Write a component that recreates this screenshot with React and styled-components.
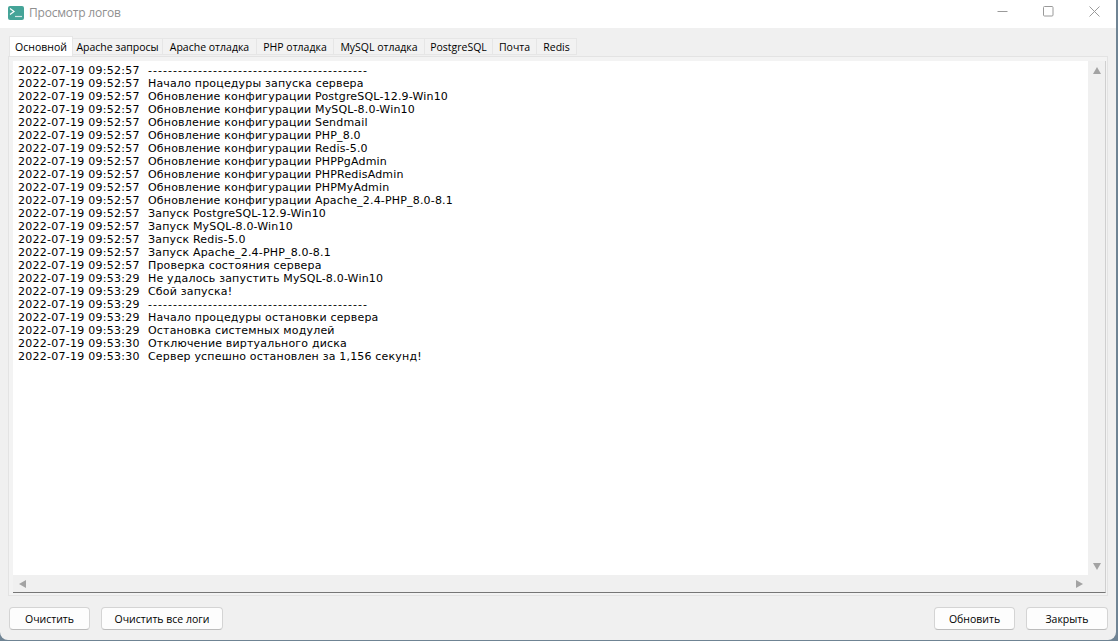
import React from "react";
import styled, { createGlobalStyle } from "styled-components";

const GlobalStyle = createGlobalStyle`
    html, body {
        margin: 0;
        padding: 0;
        height: 100%;
        background: #6f8494;
        overflow: hidden;
    }
    #root {
        height: 100%;
    }
`;

const Frame = styled.div`
    width: 1116px;
    height: 640px;
    display: flex;
    flex-flow: column;
    background: #f0f0f0;
    border-radius: 0 0 8px 8px;
    overflow: hidden;
    font-family: "Open Sans", sans-serif;
    font-size: 10.5px;
    color: #000;
`;

const TitleBar = styled.div`
    height: 28px;
    flex: none;
    display: flex;
    align-items: center;
    background: #fff;
    padding-left: 8px;
`;

const Title = styled.div`
    margin: -3px 0 0 5px;
    font-size: 12px;
    letter-spacing: -0.2px;
    color: #8f8f8f;
`;

const WinButtons = styled.div`
    margin-left: auto;
    display: flex;
    height: 100%;
`;

const WinButton = styled.div`
    width: 46px;
    height: 100%;
    display: flex;
    align-items: center;
    justify-content: center;
    margin-top: -3px;
    transform: translateX(1px);
`;

const Body = styled.div`
    flex: 1;
    display: flex;
    flex-flow: column;
    padding: 10px 8px 10px 8px;
    min-height: 0;
`;

const TabRow = styled.div`
    display: flex;
    height: 18px;
    flex: none;
    padding-left: 1px;
    position: relative;
    z-index: 1;
`;

const Tab = styled.div`
    display: flex;
    align-items: center;
    justify-content: center;
    box-sizing: border-box;
    width: ${(p) => p.$w}px;
    height: ${(p) => (p.$active ? 20 : 17)}px;
    margin-top: ${(p) => (p.$active ? -2 : 0)}px;
    background: ${(p) => (p.$active ? "#fff" : "#f2f2f2")};
    border: 1px solid #e6e6e6;
    border-bottom: ${(p) => (p.$active ? "0" : "1px solid #e6e6e6")};
    border-left: ${(p) => (p.$active ? "1px solid #e6e6e6" : "0")};
    white-space: nowrap;
`;

const Pane = styled.div`
    flex: 1;
    min-height: 0;
    display: flex;
    box-sizing: border-box;
    padding: 4px 1px 2px 4px;
    border: 1px solid #e3e3e3;
    background: #f3f3f3;
`;

const ScrollBox = styled.div`
    flex: 1;
    min-width: 0;
    display: grid;
    grid-template-columns: 1fr 17px;
    grid-template-rows: 1fr 17px;
    border-bottom: 1px solid #767676;
    border-right: 1px solid #cfcfcf;
`;

const LogArea = styled.div`
    background: #fff;
    padding: 3px 0 0 5px;
    font-family: "DejaVu Sans", sans-serif;
    font-size: 11px;
    line-height: 13px;
    overflow: hidden;
`;

const LogLine = styled.div`
    display: flex;
    white-space: pre;
    color: #000;
`;

const LogTime = styled.span`
    width: 130px;
    flex: none;
    letter-spacing: 0.26px;
`;

const LogText = styled.span`
    letter-spacing: ${(p) => (p.$rule ? "1.03px" : "0.18px")};
`;

const ScrollTrack = styled.div`
    background: #f0f0f0;
    display: flex;
    flex-flow: ${(p) => (p.$vertical ? "column" : "row")};
    align-items: center;
    justify-content: space-between;
    padding: ${(p) => (p.$vertical ? "6px 0 5px" : "0 5px 0 6px")};
`;

const Arrow = styled.div`
    width: 0;
    height: 0;
    border-style: solid;
    border-color: transparent;
    ${(p) => p.$dir === "up" && "border-width: 0 4px 7px; border-bottom-color: #a3a3a3;"}
    ${(p) => p.$dir === "down" && "border-width: 7px 4px 0; border-top-color: #a3a3a3;"}
    ${(p) => p.$dir === "left" && "border-width: 4px 7px 4px 0; border-right-color: #a3a3a3;"}
    ${(p) => p.$dir === "right" && "border-width: 4px 0 4px 7px; border-left-color: #a3a3a3;"}
`;

const Corner = styled.div`
    background: #f0f0f0;
`;

const Footer = styled.div`
    flex: none;
    display: flex;
    gap: 11px;
    padding: 11px 0 0 1px;
`;

const Button = styled.div`
    box-sizing: border-box;
    width: ${(p) => p.$w}px;
    height: 23px;
    display: flex;
    align-items: center;
    justify-content: center;
    background: #fdfdfd;
    border: 1px solid #d4d4d4;
    border-bottom-color: #bcbcbc;
    border-radius: 4px;
    white-space: nowrap;
`;

const Spacer = styled.div`
    flex: 1;
`;

const AppIconSvg = styled.svg`
    margin-top: -3px;
`;

const tabs = [
    ["Основной", 64],
    ["Apache запросы", 90],
    ["Apache отладка", 94],
    ["PHP отладка", 77],
    ["MySQL отладка", 91],
    ["PostgreSQL", 68],
    ["Почта", 44],
    ["Redis", 40],
];

const dashes = "--------------------------------------------";

const logs = [
    ["2022-07-19 09:52:57", dashes],
    ["2022-07-19 09:52:57", "Начало процедуры запуска сервера"],
    ["2022-07-19 09:52:57", "Обновление конфигурации PostgreSQL-12.9-Win10"],
    ["2022-07-19 09:52:57", "Обновление конфигурации MySQL-8.0-Win10"],
    ["2022-07-19 09:52:57", "Обновление конфигурации Sendmail"],
    ["2022-07-19 09:52:57", "Обновление конфигурации PHP_8.0"],
    ["2022-07-19 09:52:57", "Обновление конфигурации Redis-5.0"],
    ["2022-07-19 09:52:57", "Обновление конфигурации PHPPgAdmin"],
    ["2022-07-19 09:52:57", "Обновление конфигурации PHPRedisAdmin"],
    ["2022-07-19 09:52:57", "Обновление конфигурации PHPMyAdmin"],
    ["2022-07-19 09:52:57", "Обновление конфигурации Apache_2.4-PHP_8.0-8.1"],
    ["2022-07-19 09:52:57", "Запуск PostgreSQL-12.9-Win10"],
    ["2022-07-19 09:52:57", "Запуск MySQL-8.0-Win10"],
    ["2022-07-19 09:52:57", "Запуск Redis-5.0"],
    ["2022-07-19 09:52:57", "Запуск Apache_2.4-PHP_8.0-8.1"],
    ["2022-07-19 09:52:57", "Проверка состояния сервера"],
    ["2022-07-19 09:53:29", "Не удалось запустить MySQL-8.0-Win10"],
    ["2022-07-19 09:53:29", "Сбой запуска!"],
    ["2022-07-19 09:53:29", dashes],
    ["2022-07-19 09:53:29", "Начало процедуры остановки сервера"],
    ["2022-07-19 09:53:29", "Остановка системных модулей"],
    ["2022-07-19 09:53:30", "Отключение виртуального диска"],
    ["2022-07-19 09:53:30", "Сервер успешно остановлен за 1,156 секунд!"],
];

function AppIcon() {
    return (
        <AppIconSvg width="16" height="14" viewBox="0 0 16 14">
            <rect width="16" height="14" rx="2" fill="#45a498" />
            <path d="M2 2.5 6 5.5 2 8.5" fill="none" stroke="#fff" strokeWidth="1.2" />
            <path d="M7 10.5h7" stroke="#cfe8e5" strokeWidth="1.2" />
        </AppIconSvg>
    );
}

export default function App() {
    return (
        <Frame>
            <GlobalStyle />
            <TitleBar>
                <AppIcon />
                <Title>Просмотр логов</Title>
                <WinButtons>
                    <WinButton>
                        <svg width="11" height="11" viewBox="0 0 11 11">
                            <path d="M0.5 5.5h10" stroke="#9a9a9a" />
                        </svg>
                    </WinButton>
                    <WinButton>
                        <svg width="11" height="11" viewBox="0 0 11 11">
                            <rect x="0.5" y="0.5" width="9.5" height="9.5" rx="1" fill="none" stroke="#9a9a9a" />
                        </svg>
                    </WinButton>
                    <WinButton>
                        <svg width="11" height="11" viewBox="0 0 11 11">
                            <path d="M0.5 0.5l10 10M10.5 0.5l-10 10" stroke="#9a9a9a" />
                        </svg>
                    </WinButton>
                </WinButtons>
            </TitleBar>
            <Body>
                <TabRow>
                    {tabs.map(([name, w], i) => (
                        <Tab key={name} $w={w} $active={i === 0}>
                            {name}
                        </Tab>
                    ))}
                </TabRow>
                <Pane>
                    <ScrollBox>
                        <LogArea>
                            {logs.map(([time, text], i) => (
                                <LogLine key={i}>
                                    <LogTime>{time}</LogTime>
                                    <LogText $rule={text === dashes}>{text}</LogText>
                                </LogLine>
                            ))}
                        </LogArea>
                        <ScrollTrack $vertical>
                            <Arrow $dir="up" />
                            <Arrow $dir="down" />
                        </ScrollTrack>
                        <ScrollTrack>
                            <Arrow $dir="left" />
                            <Arrow $dir="right" />
                        </ScrollTrack>
                        <Corner />
                    </ScrollBox>
                </Pane>
                <Footer>
                    <Button $w={81}>Очистить</Button>
                    <Button $w={122}>Очистить все логи</Button>
                    <Spacer />
                    <Button $w={81}>Обновить</Button>
                    <Button $w={82}>Закрыть</Button>
                </Footer>
            </Body>
        </Frame>
    );
}
